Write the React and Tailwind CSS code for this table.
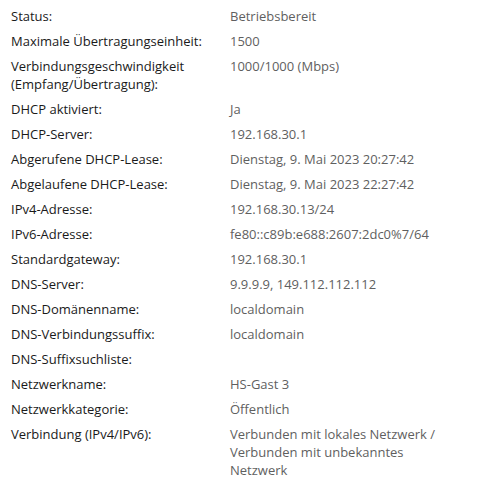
import React from 'react';

const rows = [
  ['Status:', 'Betriebsbereit'],
  ['Maximale Übertragungseinheit:', '1500'],
  ['Verbindungsgeschwindigkeit (Empfang/Übertragung):', '1000/1000 (Mbps)'],
  ['DHCP aktiviert:', 'Ja'],
  ['DHCP-Server:', '192.168.30.1'],
  ['Abgerufene DHCP-Lease:', 'Dienstag, 9. Mai 2023 20:27:42'],
  ['Abgelaufene DHCP-Lease:', 'Dienstag, 9. Mai 2023 22:27:42'],
  ['IPv4-Adresse:', '192.168.30.13/24'],
  ['IPv6-Adresse:', 'fe80::c89b:e688:2607:2dc0%7/64'],
  ['Standardgateway:', '192.168.30.1'],
  ['DNS-Server:', '9.9.9.9, 149.112.112.112'],
  ['DNS-Domänenname:', 'localdomain'],
  ['DNS-Verbindungssuffix:', 'localdomain'],
  ['DNS-Suffixsuchliste:', ''],
  ['Netzwerkname:', 'HS-Gast 3'],
  ['Netzwerkkategorie:', 'Öffentlich'],
  ['Verbindung (IPv4/IPv6):', 'Verbunden mit lokales Netzwerk / Verbunden mit unbekanntes Netzwerk'],
];

export default function App() {
  return (
    <div className="w-[497px] h-[488px] bg-white pl-[11px] pt-[7px] font-['Open_Sans',sans-serif] text-[13px] leading-[18px]">
      <div className="grid grid-cols-[219px_225px] gap-y-[7px]">
        {rows.map(([label, value]) => (
          <React.Fragment key={label}>
            <div className="text-[#1a1a1a] pr-2">{label}</div>
            <div className="text-[#5f5f5f]">{value}</div>
          </React.Fragment>
        ))}
      </div>
    </div>
  );
}
